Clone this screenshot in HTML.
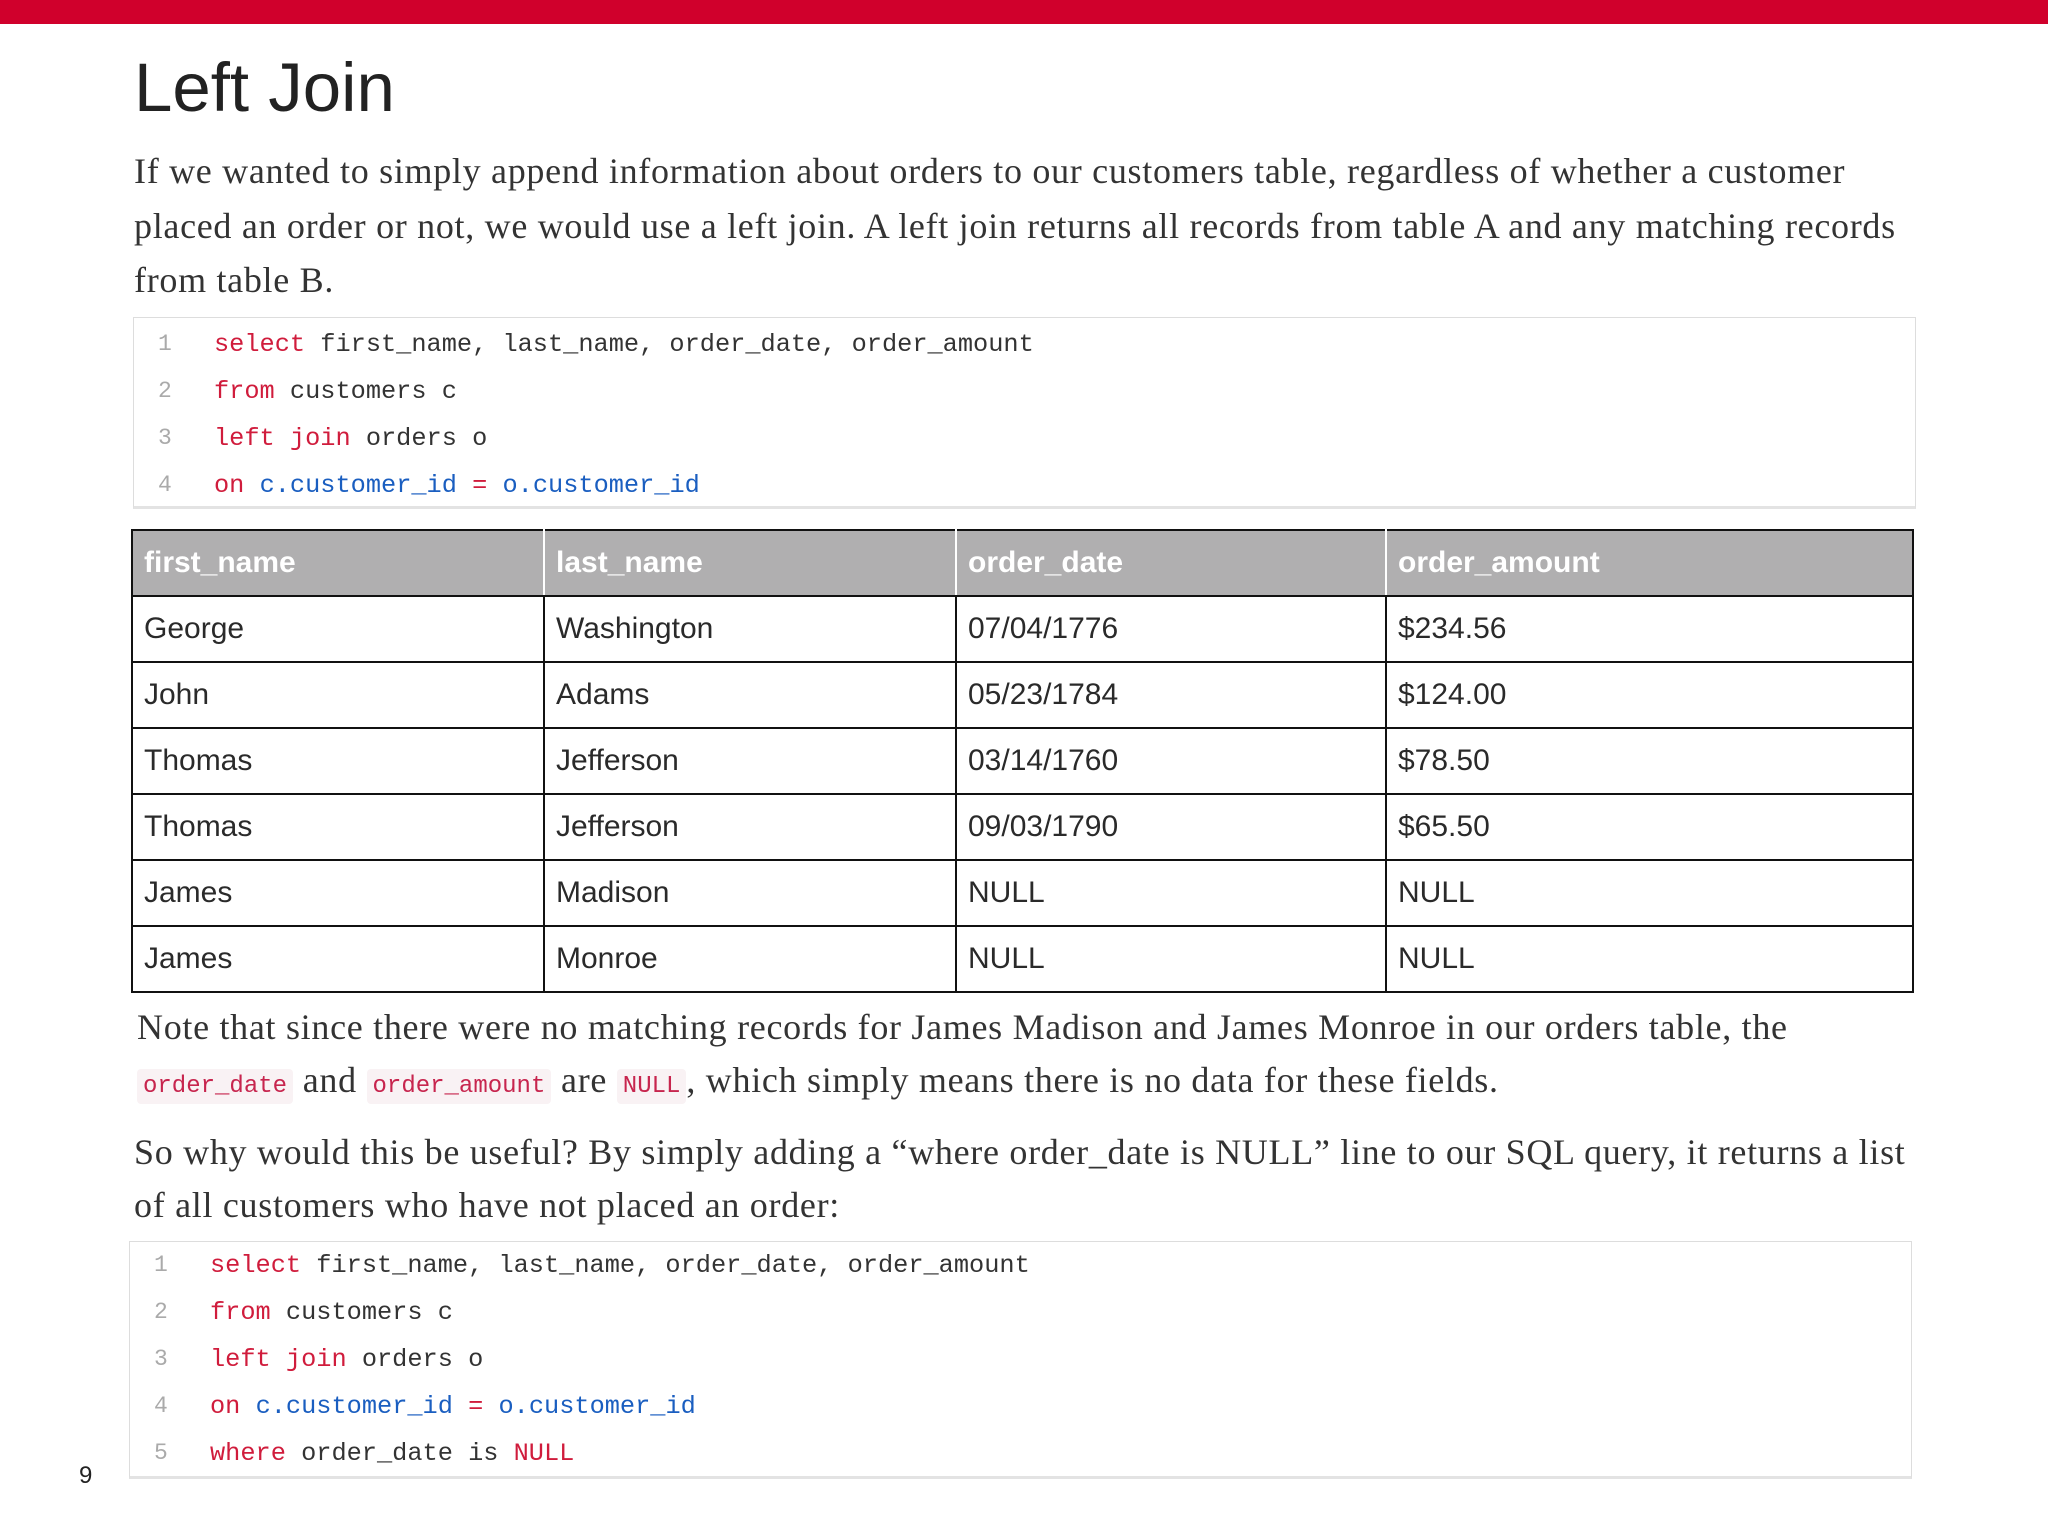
<!DOCTYPE html>
<html><head><meta charset="utf-8"><style>
body{margin:0;width:2048px;height:1536px;background:#fff;position:relative;overflow:hidden;font-family:"Liberation Serif",serif;color:#333}
.bar{position:absolute;left:0;top:0;width:2048px;height:24px;background:#d0002c}
h1{position:absolute;left:134px;top:48px;margin:0;font:400 69px "Liberation Sans",sans-serif;color:#222}
.t{position:absolute;font-size:36px;letter-spacing:0.7px;line-height:54px;white-space:nowrap;color:#333}
.code{position:absolute;border:1px solid #ddd;border-bottom:3px solid #e3e3e3;background:#fff;font-family:"Liberation Mono",monospace;font-size:25.3px}
.ln{position:absolute;white-space:pre;line-height:47px}
.n{position:absolute;color:#aaa;font-size:23px}
.k{color:#d01c3c}.b{color:#1a5ec0}
table{position:absolute;left:131px;top:529px;width:1783px;border-collapse:collapse;font:30px "Liberation Sans",sans-serif;color:#2a2a2a}
td,th{border:2px solid #111;height:64px;padding:0 11px;text-align:left}
th{background:#b0afb0;color:#fff;font-weight:700;border-color:#111 #fff;border-top-color:#111}
th:first-child{border-left-color:#111}th:last-child{border-right-color:#111}
.c{font-family:"Liberation Mono",monospace;font-size:24px;letter-spacing:0;color:#c7254e;background:#f9f2f4;padding:4px 6px;border-radius:4px}
.pg{position:absolute;left:79px;top:1462px;font:24px "Liberation Sans",sans-serif;color:#222}
</style></head><body>
<div class="bar"></div>
<h1>Left Join</h1>
<div class="t" style="left:134px;top:144px">If we wanted to simply append information about orders to our customers table, regardless of whether a customer</div>
<div class="t" style="left:134px;top:199px">placed an order or not, we would use a left join. A left join returns all records from table A and any matching records</div>
<div class="t" style="left:134px;top:253px">from table B.</div>

<div class="code" style="left:133px;top:317px;width:1781px;height:188px">
<div class="ln" style="top:3px;left:0"><span class="n" style="left:24px">1</span><span style="position:absolute;left:80px"><span class="k">select</span> first_name, last_name, order_date, order_amount</span></div>
<div class="ln" style="top:50px;left:0"><span class="n" style="left:24px">2</span><span style="position:absolute;left:80px"><span class="k">from</span> customers c</span></div>
<div class="ln" style="top:97px;left:0"><span class="n" style="left:24px">3</span><span style="position:absolute;left:80px"><span class="k">left join</span> orders o</span></div>
<div class="ln" style="top:144px;left:0"><span class="n" style="left:24px">4</span><span style="position:absolute;left:80px"><span class="k">on</span> <span class="b">c.customer_id</span> <span class="k">=</span> <span class="b">o.customer_id</span></span></div>
</div>

<table>
<tr><th style="width:388px">first_name</th><th style="width:388px">last_name</th><th style="width:406px">order_date</th><th>order_amount</th></tr>
<tr><td>George</td><td>Washington</td><td>07/04/1776</td><td>$234.56</td></tr>
<tr><td>John</td><td>Adams</td><td>05/23/1784</td><td>$124.00</td></tr>
<tr><td>Thomas</td><td>Jefferson</td><td>03/14/1760</td><td>$78.50</td></tr>
<tr><td>Thomas</td><td>Jefferson</td><td>09/03/1790</td><td>$65.50</td></tr>
<tr><td>James</td><td>Madison</td><td>NULL</td><td>NULL</td></tr>
<tr><td>James</td><td>Monroe</td><td>NULL</td><td>NULL</td></tr>
</table>

<div class="t" style="left:137px;top:1000px">Note that since there were no matching records for James Madison and James Monroe in our orders table, the</div>
<div class="t" style="left:137px;top:1053px"><span class="c">order_date</span> and <span class="c">order_amount</span> are <span class="c">NULL</span>, which simply means there is no data for these fields.</div>
<div class="t" style="left:134px;top:1125px">So why would this be useful? By simply adding a “where order_date is NULL” line to our SQL query, it returns a list</div>
<div class="t" style="left:134px;top:1178px">of all customers who have not placed an order:</div>

<div class="code" style="left:129px;top:1241px;width:1781px;height:234px">
<div class="ln" style="top:0px;left:0"><span class="n" style="left:24px">1</span><span style="position:absolute;left:80px"><span class="k">select</span> first_name, last_name, order_date, order_amount</span></div>
<div class="ln" style="top:47px;left:0"><span class="n" style="left:24px">2</span><span style="position:absolute;left:80px"><span class="k">from</span> customers c</span></div>
<div class="ln" style="top:94px;left:0"><span class="n" style="left:24px">3</span><span style="position:absolute;left:80px"><span class="k">left join</span> orders o</span></div>
<div class="ln" style="top:141px;left:0"><span class="n" style="left:24px">4</span><span style="position:absolute;left:80px"><span class="k">on</span> <span class="b">c.customer_id</span> <span class="k">=</span> <span class="b">o.customer_id</span></span></div>
<div class="ln" style="top:188px;left:0"><span class="n" style="left:24px">5</span><span style="position:absolute;left:80px"><span class="k">where</span> order_date is <span class="k">NULL</span></span></div>
</div>
<div class="pg">9</div>
</body></html>
